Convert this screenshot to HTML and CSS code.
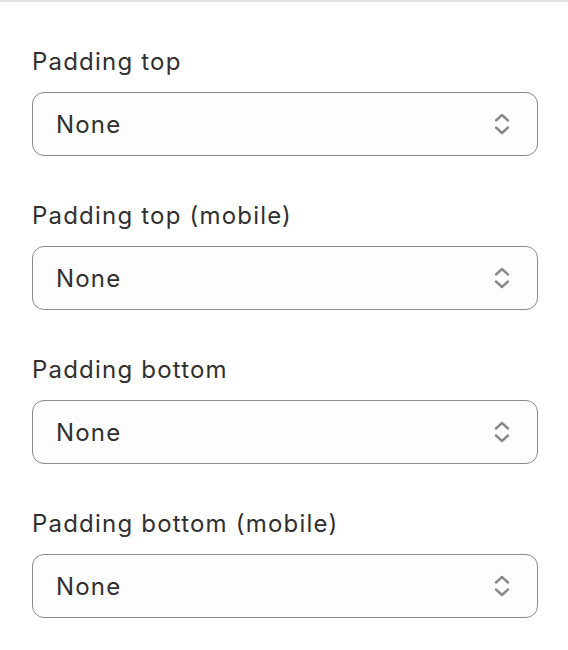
FILE: index.html
```html
<!DOCTYPE html>
<html lang="en">
<head>
  <meta charset="UTF-8">
  <meta name="viewport" content="width=device-width, initial-scale=1.0">
  <title>Padding settings</title>
  <link rel="stylesheet" href="styles.css">
</head>
<body>
  <div class="panel">
    <div class="field">
      <label for="padTop">Padding top</label>
      <div class="select-wrap">
        <select id="padTop"><option>None</option></select>
        <svg class="chevrons" width="18" height="26" viewBox="0 0 18 26"><path d="M3 9.5 9 4l6 5.5M3 16.5 9 22l6-5.5" fill="none" stroke="#8a8a8a" stroke-width="2.4" stroke-linecap="round" stroke-linejoin="round"/></svg>
      </div>
    </div>
    <div class="field">
      <label for="padTopMobile">Padding top (mobile)</label>
      <div class="select-wrap">
        <select id="padTopMobile"><option>None</option></select>
        <svg class="chevrons" width="18" height="26" viewBox="0 0 18 26"><path d="M3 9.5 9 4l6 5.5M3 16.5 9 22l6-5.5" fill="none" stroke="#8a8a8a" stroke-width="2.4" stroke-linecap="round" stroke-linejoin="round"/></svg>
      </div>
    </div>
    <div class="field">
      <label for="padBottom">Padding bottom</label>
      <div class="select-wrap">
        <select id="padBottom"><option>None</option></select>
        <svg class="chevrons" width="18" height="26" viewBox="0 0 18 26"><path d="M3 9.5 9 4l6 5.5M3 16.5 9 22l6-5.5" fill="none" stroke="#8a8a8a" stroke-width="2.4" stroke-linecap="round" stroke-linejoin="round"/></svg>
      </div>
    </div>
    <div class="field">
      <label for="padBottomMobile">Padding bottom (mobile)</label>
      <div class="select-wrap">
        <select id="padBottomMobile"><option>None</option></select>
        <svg class="chevrons" width="18" height="26" viewBox="0 0 18 26"><path d="M3 9.5 9 4l6 5.5M3 16.5 9 22l6-5.5" fill="none" stroke="#8a8a8a" stroke-width="2.4" stroke-linecap="round" stroke-linejoin="round"/></svg>
      </div>
    </div>
  </div>
</body>
</html>
```

FILE: styles.css
```css
body {
  font-family: Inter, "Noto Sans", sans-serif;
  margin: 0;
  padding: 0;
  background-color: #ffffff;
  color: #303030;
}

.panel {
  border-top: 2px solid #e3e3e3;
  padding: 44px 30px 0 32px;
  display: flex;
  flex-direction: column;
  gap: 44px;
}

.field {
  display: flex;
  flex-direction: column;
  gap: 14px;
}

label {
  font-size: 24px;
  line-height: 32px;
  letter-spacing: 1.2px;
  color: #303030;
}

.select-wrap {
  position: relative;
}

select {
  appearance: none;
  -webkit-appearance: none;
  width: 100%;
  height: 64px;
  box-sizing: border-box;
  padding: 0 60px 0 23px;
  font-family: inherit;
  font-size: 24px;
  letter-spacing: 1.2px;
  color: #303030;
  background-color: #fdfdfd;
  border: 1px solid #8a8a8a;
  border-radius: 12px;
}

.chevrons {
  position: absolute;
  right: 27px;
  top: 19px;
  pointer-events: none;
}
```
